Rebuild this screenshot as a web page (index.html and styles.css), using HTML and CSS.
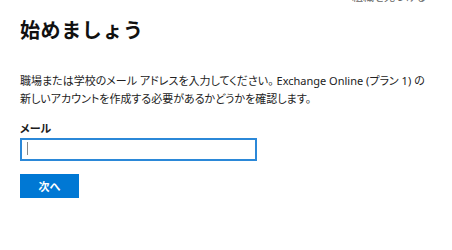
FILE: index.html
```html
<!DOCTYPE html>
<html lang="ja">
<head>
<meta charset="utf-8">
<link rel="stylesheet" href="styles.css">
</head>
<body>
<div class="topbar"><a class="toplink">組織を見つける</a></div>
<main class="main">
  <h1 class="title">始めましょう</h1>
  <p class="desc">職場または学校のメール アドレスを入力してください。 Exchange Online (プラン 1) の新しいアカウントを作成する必要があるかどうかを確認します。</p>
  <label class="label" for="email">メール</label>
  <div class="field"><input id="email" class="input" type="email"><span class="caret"></span></div>
  <button class="btn">次へ</button>
</main>
</body>
</html>
```
FILE: styles.css
```css
html, body { margin: 0; padding: 0; background: #fff; }
body {
  font-family: "Noto Sans", "Noto Sans CJK JP", sans-serif;
  color: #1b1b1b;
  width: 452px;
  height: 250px;
  overflow: hidden;
}
.topbar {
  height: 4px;
  overflow: hidden;
  display: flex;
  justify-content: flex-end;
  padding-right: 26px;
}
.toplink {
  font-size: 11px;
  line-height: 12px;
  color: #666;
  margin-top: -9px;
  font-feature-settings: "palt";
}
.main { padding: 0 20px; }
.title {
  font-family: "Noto Sans CJK JP", sans-serif;
  font-size: 20px;
  font-weight: 700;
  line-height: 28px;
  letter-spacing: 0.6px;
  margin: 12px 0 0;
  color: #111;
}
.desc {
  font-size: 11px;
  line-height: 18px;
  margin: 28px 0 0;
  width: 410px;
  font-feature-settings: "palt";
  color: #222;
}
.label {
  display: block;
  font-size: 11px;
  font-weight: 600;
  line-height: 16px;
  margin-top: 13px;
  font-feature-settings: "palt";
}
.field {
  position: relative;
  width: 237px;
  height: 23px;
  margin-top: 0;
}
.input {
  box-sizing: border-box;
  width: 100%;
  height: 100%;
  border: 2px solid #2b88d8;
  outline: none;
  margin: 0;
  padding: 0 6px;
  background: #fff;
}
.caret {
  position: absolute;
  left: 7px;
  top: 5px;
  width: 1px;
  height: 13px;
  background: #888;
}
.btn {
  display: block;
  margin-top: 14px;
  width: 59px;
  height: 24px;
  border: none;
  background: #0078d4;
  color: #fff;
  font-family: "Noto Sans CJK JP", sans-serif;
  font-size: 11px;
  font-weight: 700;
  padding: 0;
}
```
